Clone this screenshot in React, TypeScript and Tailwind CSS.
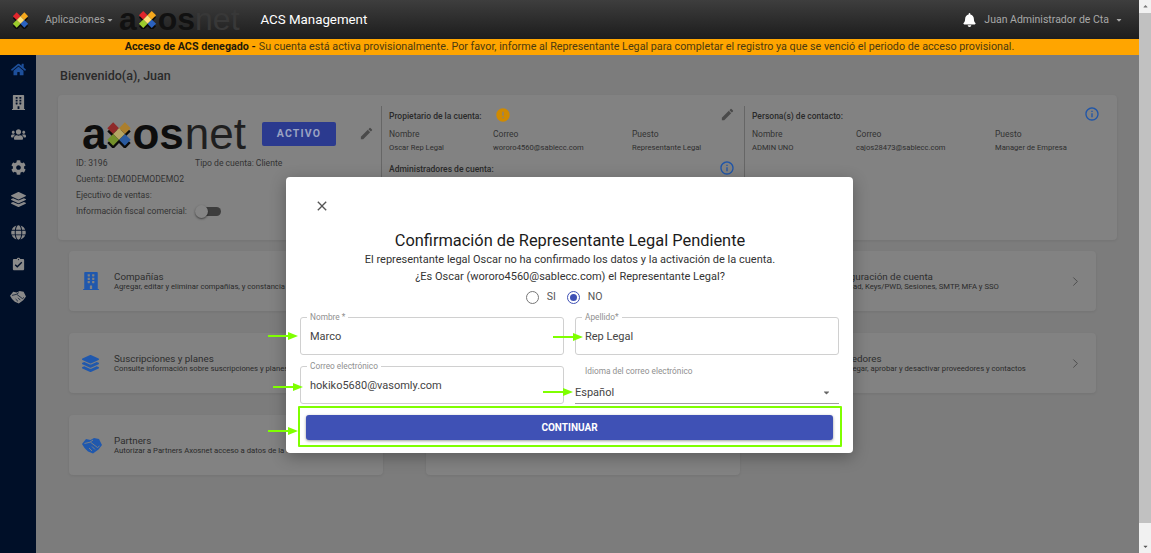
import {
  FaBell,
  FaBuilding,
  FaCaretDown,
  FaCog,
  FaGlobe,
  FaHome,
  FaLayerGroup,
  FaUsers,
} from 'react-icons/fa';
import { MdAssignmentTurnedIn, MdClose, MdEdit, MdError, MdInfoOutline } from 'react-icons/md';
import { ChevronRight } from 'lucide-react';

const SIDE_ICONS = [FaBuilding, FaUsers, FaCog, FaLayerGroup, FaGlobe, MdAssignmentTurnedIn];

function XMark({ className, muted }: { className: string; muted?: boolean }) {
  const c = muted
    ? ['#8f2a2a', '#ab7f2e', '#74902a', '#2a5a9f', '#b5a565']
    : ['#e0262c', '#f5a81c', '#9ccc2c', '#2b62c0', '#ffe27a'];
  return (
    <svg viewBox="0 0 40 40" className={className}>
      <g fill="#0b0b0b" transform="translate(0 5)">
        <path d="M11 2 20 11 29 2 38 11 29 20 38 29 29 38 20 29 11 38 2 29 11 20 2 11Z" />
      </g>
      <path d="M11 2 20 11 11 20 2 11Z" fill={c[0]} />
      <path d="M29 2 38 11 29 20 20 11Z" fill={c[1]} />
      <path d="M11 20 20 29 11 38 2 29Z" fill={c[2]} />
      <path d="M29 20 38 29 29 38 20 29Z" fill={c[3]} />
      <path d="M20 11 29 20 20 29 11 20Z" fill={c[4]} />
    </svg>
  );
}

function Arrow({ className }: { className: string }) {
  return (
    <svg viewBox="0 0 30 8" className={`absolute h-[8px] w-[30px] ${className}`}>
      <path d="M0 2.9H20V0L30 4 20 8V5.1H0Z" fill="#7fff00" />
    </svg>
  );
}

function Handshake({ className, crack }: { className: string; crack: string }) {
  return (
    <svg viewBox="0 0 20 17" className={className}>
      <path d="M0 7 4 2 8.5 3 12 1 17 2 20 8 16.5 12.5 11 16.5 6 14.5 2.5 11Z" fill="currentColor" />
      <path d="M2.5 6.5 8 5.2 11 3M8.5 5.2 15.5 10.5 17.5 9M7 11 10 14M10 9.5 13 12.5" fill="none" stroke={crack} strokeWidth="0.9" />
    </svg>
  );
}

function NavCard({ icon: Icon, iconClass, title, text, arrow, children }: { icon?: any; iconClass?: string; title?: string; text?: string; arrow?: boolean; children?: React.ReactNode }) {
  return (
    <div className="flex h-[60px] w-[314px] items-center rounded-[4px] bg-[#828282] pl-[13px] pr-[13px] shadow-[0_1px_3px_rgba(0,0,0,0.08)]">
      <div className="w-[32px] shrink-0">
        {Icon && <Icon className={`text-[#2058ad] ${iconClass}`} />}
        {children}
      </div>
      <div className="min-w-0 flex-1">
        <div className="text-[9.8px] leading-[11px] text-[#2e2e2e]">{title}</div>
        <div className="whitespace-nowrap text-[7.7px] leading-[9px] text-[#2a2a2a]">{text}</div>
      </div>
      {arrow && <ChevronRight strokeWidth={1.5} className="h-[15px] w-[15px] text-[#4a4a4a]" />}
    </div>
  );
}

function PeopleTable({ name, mail, role }: { name: string; mail: string; role: string }) {
  return (
    <div className="mt-[2px] grid grid-cols-[104px_139px_1fr]">
      <span className="text-[8.5px] leading-[12px] text-[#333]">Nombre</span>
      <span className="text-[8.5px] leading-[12px] text-[#333]">Correo</span>
      <span className="text-[8.5px] leading-[12px] text-[#333]">Puesto</span>
      <span className="mt-[2px] text-[7.6px] leading-[11px] text-[#2e2e2e]">{name}</span>
      <span className="mt-[2px] text-[7.6px] leading-[11px] text-[#2e2e2e]">{mail}</span>
      <span className="mt-[2px] text-[7.6px] leading-[11px] text-[#2e2e2e]">{role}</span>
    </div>
  );
}

function OutlinedField({ label, value, pt }: { label: string; value: string; pt?: string }) {
  return (
    <div className={`relative flex h-[38px] w-[264px] items-center rounded-[3px] border border-[#d0d0d0] px-[9px] ${pt}`}>
      <span className="absolute -top-[6px] left-[6px] bg-white px-[3px] text-[8.3px] leading-[11px] text-[#909090]">{label}</span>
      <span className="text-[11px] text-[#444]">{value}</span>
    </div>
  );
}

export default function App() {
  return (
    <div className="relative flex h-[553px] w-[1151px] overflow-hidden bg-[#7c7c7c] font-[Roboto,sans-serif]">
      <div className="flex min-w-0 flex-1 flex-col">
        <header className="flex h-[39px] shrink-0 items-center bg-linear-to-b from-[#3e3e3e] to-[#1d1d1d] pl-[12px] pr-[16px]">
          <XMark className="h-[18px] w-[17px]" />
          <span className="ml-[16px] text-[10.5px] text-[#a0a0a0]">Aplicaciones</span>
          <FaCaretDown className="ml-[1px] h-[8px] w-[8px] text-[#a0a0a0]" />
          <div className="ml-[5px] flex items-center font-['Liberation_Sans',sans-serif] text-[32px] leading-[39px]">
            <span className="font-bold text-[#111]">a</span>
            <XMark className="mx-[1px] h-[19px] w-[19px]" />
            <span className="font-bold text-[#111]">os</span>
            <span className="text-[#383838]">net</span>
          </div>
          <span className="ml-[21px] text-[13.3px] text-white">ACS Management</span>
          <FaBell className="ml-auto h-[14px] w-[13px] text-white" />
          <span className="ml-[8px] text-[10.5px] text-[#a8a8a8]">Juan Administrador de Cta</span>
          <FaCaretDown className="ml-[6px] h-[8px] w-[8px] text-[#a8a8a8]" />
        </header>

        <div className="flex h-[16px] shrink-0 items-center justify-center bg-[#ffa500] text-[10.75px] text-[#4b3a10]">
          <b className="mr-[3px] font-bold text-[#1f1a0a]">Acceso de ACS denegado -</b>
          Su cuenta está activa provisionalmente. Por favor, informe al Representante Legal para completar el registro ya que se venció el periodo de acceso provisional.
        </div>

        <div className="flex min-h-0 flex-1">
          <aside className="flex w-[36px] shrink-0 flex-col items-center gap-[17.5px] bg-[#000f28] pt-[7px]">
            <FaHome className="h-[15px] w-[15px] text-[#1d4f9a]" />
            {SIDE_ICONS.map((Icon, i) => (
              <Icon key={i} className="h-[15px] w-[15px] text-[#8a8a8a]" />
            ))}
            <Handshake crack="#000f28" className="h-[14px] w-[16px] text-[#8a8a8a]" />
          </aside>

          <main className="min-w-0 flex-1 pl-[22px]">
            <h1 className="ml-[2px] mt-[14px] text-[12.5px] font-medium leading-[14px] text-[#2a2a2a]">Bienvenido(a), Juan</h1>

            <section className="mt-[12px] flex h-[145px] w-[1059px] rounded-[4px] bg-[#828282] pt-[11px] shadow-[0_1px_3px_rgba(0,0,0,0.08)]">
              <div className="w-[323px] shrink-0 pl-[18px]">
                <div className="mt-[7px] flex h-[41px] items-center">
                  <div className="ml-[6px] flex items-center font-['Liberation_Sans',sans-serif] text-[44px] leading-[41px]">
                    <span className="font-bold text-[#0d0d0d]">a</span>
                    <XMark muted className="h-[28px] w-[26px]" />
                    <span className="font-bold text-[#0d0d0d]">os</span>
                    <span className="ml-[1px] text-[#1f1f1f]">net</span>
                  </div>
                  <span className="ml-[16px] flex h-[24px] w-[74px] items-center justify-center rounded-[2px] bg-[#2b3a8f] text-[10.5px] font-bold tracking-[1.2px] text-[#9aa2c2]">ACTIVO</span>
                  <MdEdit className="ml-[23px] h-[15px] w-[15px] text-[#4a4a4a]" />
                </div>
                <div className="mt-[1px] flex h-[16px] items-center text-[8.6px] text-[#333]">
                  <span className="w-[119px]">ID: 3196</span>
                  <span>Tipo de cuenta: Cliente</span>
                </div>
                <div className="flex h-[16px] items-center text-[8.6px] text-[#333]">Cuenta: DEMODEMODEMO2</div>
                <div className="flex h-[16px] items-center text-[8.6px] text-[#333]">Ejecutivo de ventas:</div>
                <div className="flex h-[17px] items-center text-[8.6px] text-[#333]">
                  Información fiscal comercial:
                  <span className="relative ml-[9px] h-[9px] w-[25px] rounded-full bg-[#3d3d3d]">
                    <span className="absolute -left-[1px] -top-[2px] h-[13px] w-[13px] rounded-full bg-[#858585] shadow-[0_1px_2px_rgba(0,0,0,0.5)]" />
                  </span>
                </div>
              </div>

              <div className="h-[134px] w-[363px] shrink-0 border-l border-[#666] pl-[7px] pr-[9px]">
                <div className="flex h-[20px] items-center">
                  <span className="text-[8.5px] font-medium text-[#2a2a2a]">Propietario de la cuenta:</span>
                  <MdError className="ml-[13px] -mt-[3px] h-[16px] w-[16px] text-[#d08a00]" />
                  <MdEdit className="ml-auto -mt-[3px] h-[15px] w-[15px] text-[#4a4a4a]" />
                </div>
                <PeopleTable name="Oscar Rep Legal" mail="wororo4560@sablecc.com" role="Representante Legal" />
                <div className="mt-[8px] flex h-[16px] items-center">
                  <span className="text-[8.5px] font-medium text-[#2a2a2a]">Administradores de cuenta:</span>
                  <MdInfoOutline className="ml-auto -mt-[3px] h-[16px] w-[16px] text-[#1f55a8]" />
                </div>
              </div>

              <div className="h-[134px] flex-1 border-l border-[#666] pl-[7px] pr-[17px]">
                <div className="flex h-[20px] items-center">
                  <span className="text-[8.5px] font-medium text-[#2a2a2a]">Persona(s) de contacto:</span>
                  <MdInfoOutline className="ml-auto -mt-[5px] h-[16px] w-[16px] text-[#1f55a8]" />
                </div>
                <PeopleTable name="ADMIN UNO" mail="cajos28473@sablecc.com" role="Manager de Empresa" />
              </div>
            </section>

            <div className="ml-[11px] mt-[11px] grid w-[1027px] grid-cols-[314px_314px_314px] gap-x-[42.5px] gap-y-[22px]">
              <NavCard icon={FaBuilding} iconClass="h-[18px] w-[18px]" title="Compañías" text="Agregar, editar y eliminar compañías, y constancia SAT" arrow />
              <NavCard />
              <NavCard title="Configuración de cuenta" text="Seguridad, Keys/PWD, Sesiones, SMTP, MFA y SSO" arrow />
              <NavCard icon={FaLayerGroup} iconClass="h-[17px] w-[17px]" title="Suscripciones y planes" text="Consulte información sobre suscripciones y planes" arrow />
              <NavCard />
              <NavCard title="Proveedores" text="Ver, agregar, aprobar y desactivar proveedores y contactos" arrow />
              <NavCard title="Partners" text="Autorizar a Partners Axosnet acceso a datos de la cuenta" arrow>
                <Handshake crack="#828282" className="h-[17px] w-[20px] text-[#2058ad]" />
              </NavCard>
              <NavCard />
            </div>
          </main>
        </div>
      </div>

      <div className="flex w-[12px] shrink-0 flex-col bg-[#f1f1f1]">
        <div className="flex h-[13px] items-center justify-center text-[#777]">
          <FaCaretDown className="h-[7px] w-[7px] rotate-180" />
        </div>
        <div className="h-[510px] bg-[#c1c1c1]" />
        <div className="mt-auto flex h-[13px] items-center justify-center text-[#555]">
          <FaCaretDown className="h-[7px] w-[7px]" />
        </div>
      </div>

      <div className="absolute left-[286px] top-[177px] flex h-[276px] w-[567px] flex-col rounded-[4px] bg-white pl-[12px] pr-[11px] shadow-[0_4px_16px_rgba(0,0,0,0.3)]">
        <MdClose className="ml-[16px] mt-[21px] h-[16px] w-[16px] text-[#555]" />
        <h2 className="mt-[17px] text-center text-[16.4px] font-normal leading-[20px] text-[#1b1b1b]">Confirmación de Representante Legal Pendiente</h2>
        <p className="text-center text-[11px] leading-[17px] text-[#333]">
          El representante legal Oscar no ha confirmado los datos y la activación de la cuenta.
        </p>
        <p className="text-center text-[11px] leading-[17px] text-[#333]">¿Es Oscar (wororo4560@sablecc.com) el Representante Legal?</p>

        <div className="mt-[4px] flex h-[16px] items-center justify-center pr-[12px] text-[10.5px] text-[#555]">
          <span className="h-[13px] w-[13px] rounded-full border-[1.5px] border-[#777]" />
          <span className="ml-[8px] w-[20px]">SI</span>
          <span className="flex h-[13px] w-[13px] items-center justify-center rounded-full border-[1.5px] border-[#3f51b5]">
            <span className="h-[7px] w-[7px] rounded-full bg-[#3f51b5]" />
          </span>
          <span className="ml-[8px]">NO</span>
        </div>

        <div className="ml-[2px] mt-[12px] grid grid-cols-[264px_264px] gap-x-[11px] gap-y-[11px]">
          <OutlinedField label="Nombre *" value="Marco" pt="pt-[2px]" />
          <OutlinedField label="Apellido*" value="Rep Legal" pt="pt-[3px]" />
          <OutlinedField label="Correo electrónico" value="hokiko5680@vasomly.com" pt="pt-[2px]" />
          <div className="relative h-[38px] border-b border-[#a0a0a0]">
            <span className="absolute left-[10px] top-0 text-[8.3px] leading-[11px] text-[#909090]">Idioma del correo electrónico</span>
            <span className="absolute left-0 top-[19px] text-[11px] leading-[16px] text-[#444]">Español</span>
            <FaCaretDown className="absolute right-[8px] top-[22px] h-[9px] w-[9px] text-[#666]" />
          </div>
        </div>

        <div className="mt-[2px] h-[41px] rounded-[1px] border-2 border-[#7fff00] pl-[6px] pr-[7px] pt-[6px]">
          <button className="h-[25px] w-full rounded-[3px] bg-[#3f51b5] text-[10px] font-bold text-white shadow-[0_1px_3px_rgba(0,0,0,0.4)]">CONTINUAR</button>
        </div>
      </div>

      <Arrow className="left-[268px] top-[332px]" />
      <Arrow className="left-[553px] top-[333px]" />
      <Arrow className="left-[273px] top-[383px]" />
      <Arrow className="left-[543px] top-[388px]" />
      <Arrow className="left-[268px] top-[427px]" />
    </div>
  );
}
